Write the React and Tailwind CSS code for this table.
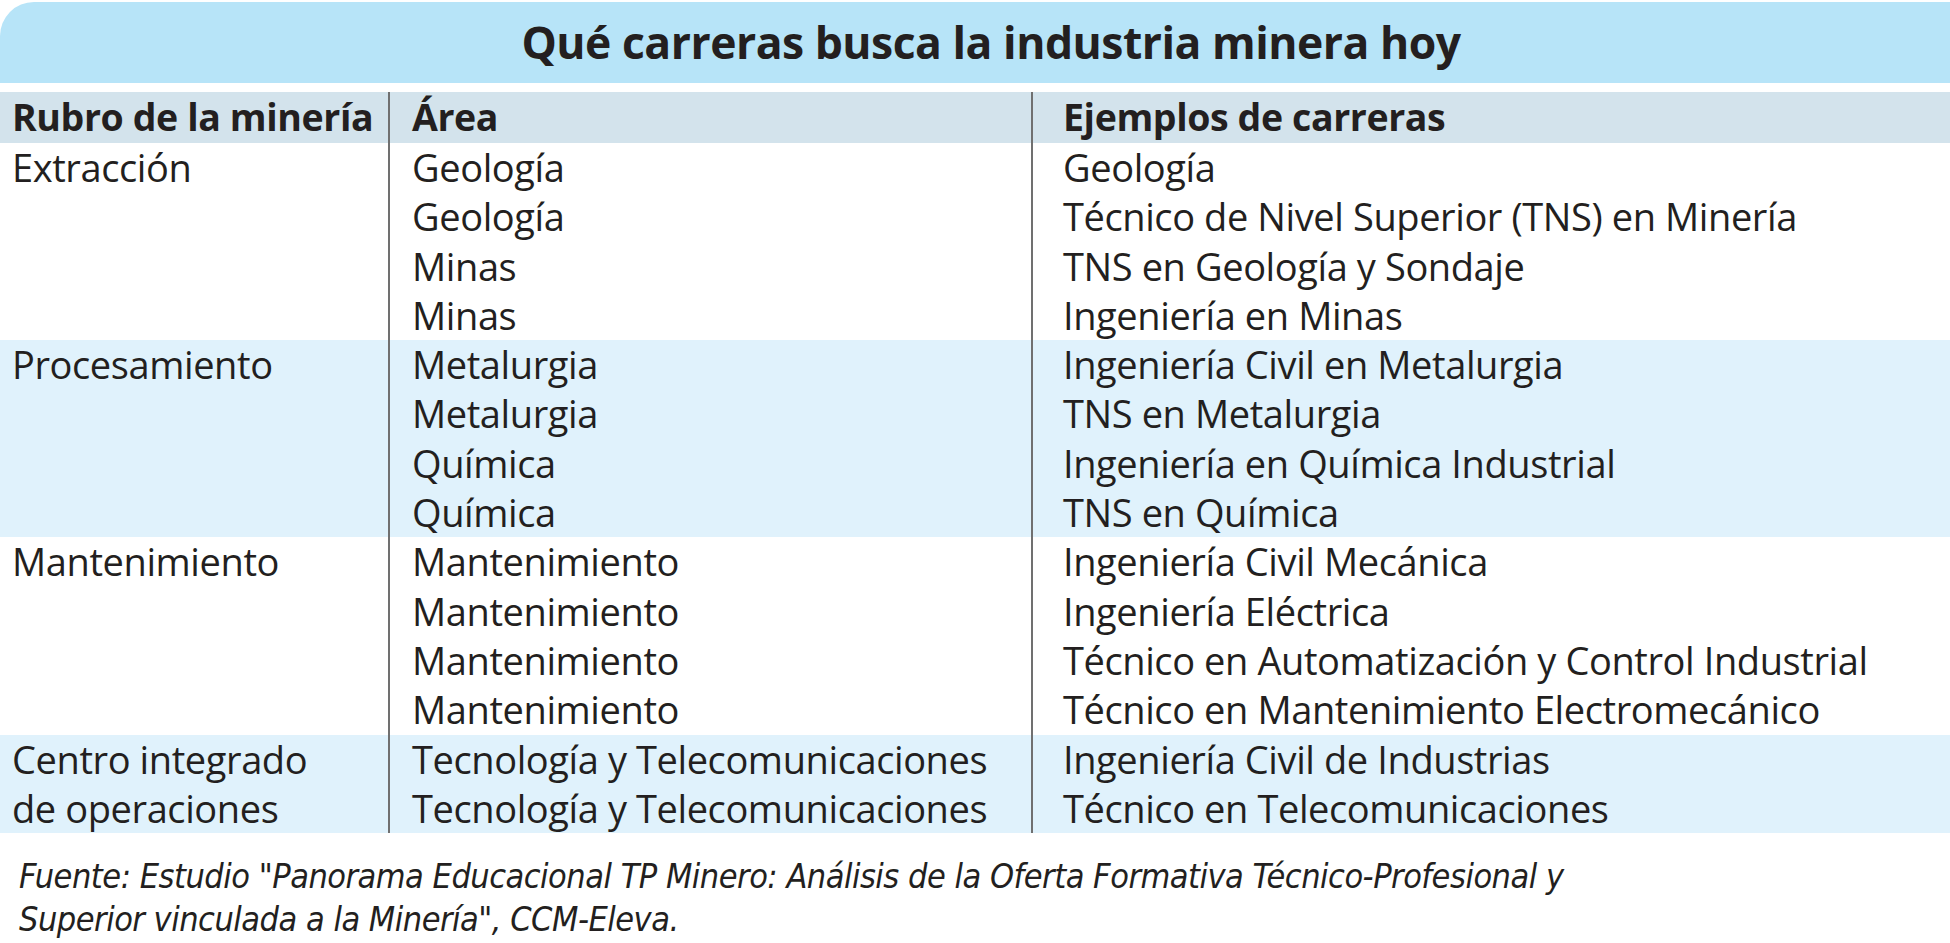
const groups = [
  {
    rubro: ["Extracción"],
    band: false,
    rows: [
      ["Geología", "Geología"],
      ["Geología", "Técnico de Nivel Superior (TNS) en Minería"],
      ["Minas", "TNS en Geología y Sondaje"],
      ["Minas", "Ingeniería en Minas"],
    ],
  },
  {
    rubro: ["Procesamiento"],
    band: true,
    rows: [
      ["Metalurgia", "Ingeniería Civil en Metalurgia"],
      ["Metalurgia", "TNS en Metalurgia"],
      ["Química", "Ingeniería en Química Industrial"],
      ["Química", "TNS en Química"],
    ],
  },
  {
    rubro: ["Mantenimiento"],
    band: false,
    rows: [
      ["Mantenimiento", "Ingeniería Civil Mecánica"],
      ["Mantenimiento", "Ingeniería Eléctrica"],
      ["Mantenimiento", "Técnico en Automatización y Control Industrial"],
      ["Mantenimiento", "Técnico en Mantenimiento Electromecánico"],
    ],
  },
  {
    rubro: ["Centro integrado", "de operaciones"],
    band: true,
    rows: [
      ["Tecnología y Telecomunicaciones", "Ingeniería Civil de Industrias"],
      ["Tecnología y Telecomunicaciones", "Técnico en Telecomunicaciones"],
    ],
  },
];

const Group = ({ group }) => (
  <div className={"flex " + (group.band ? "bg-[#e0f2fc]" : "bg-white")}>
    <div className="w-[388px] shrink-0 pl-[12px]">
      {group.rubro.map((r, i) => (
        <p key={i} className="h-[49.3px] leading-[49.3px] whitespace-nowrap">{r}</p>
      ))}
    </div>
    <div className="w-[643px] shrink-0 border-l-2 border-[#707070] pl-[22px]">
      {group.rows.map((row, i) => (
        <p key={i} className="h-[49.3px] leading-[49.3px] whitespace-nowrap">{row[0]}</p>
      ))}
    </div>
    <div className="flex-1 border-l-2 border-[#707070] pl-[30px]">
      {group.rows.map((row, i) => (
        <p key={i} className="h-[49.3px] leading-[49.3px] whitespace-nowrap">{row[1]}</p>
      ))}
    </div>
  </div>
);

const App = () => {
  return (
    <div className="w-[1950px] h-[943px] bg-white text-[#231f20] font-['Open_Sans',sans-serif] overflow-hidden">
      <div className="pt-[2px]">
        <div className="h-[81px] bg-[#b7e4f8] rounded-tl-[34px] flex items-center justify-center pl-[32px]">
          <h1 className="text-[44.5px] font-bold tracking-[-0.5px]">Qué carreras busca la industria minera hoy</h1>
        </div>
      </div>
      <div className="mt-[9px] text-[38px] tracking-[-0.4px]">
        <div className="flex h-[51px] bg-[#d3e3ec] font-bold items-center text-[37.5px]">
          <div className="w-[388px] shrink-0 pl-[12px] whitespace-nowrap">Rubro de la minería</div>
          <div className="w-[643px] shrink-0 h-full flex items-center border-l-2 border-[#707070] pl-[22px]">Área</div>
          <div className="flex-1 h-full flex items-center border-l-2 border-[#707070] pl-[30px]">Ejemplos de carreras</div>
        </div>
        {groups.map((g, i) => (
          <Group key={i} group={g} />
        ))}
      </div>
      <div className="pl-[19px] pt-[22px] italic text-[34px] leading-[43px] tracking-[-0.5px] font-['DejaVu_Sans_Condensed','Liberation_Sans_Narrow',sans-serif] whitespace-nowrap">
        <p>Fuente: Estudio "Panorama Educacional TP Minero: Análisis de la Oferta Formativa Técnico-Profesional y</p>
        <p>Superior vinculada a la Minería", CCM-Eleva.</p>
      </div>
    </div>
  );
};

export default App;
